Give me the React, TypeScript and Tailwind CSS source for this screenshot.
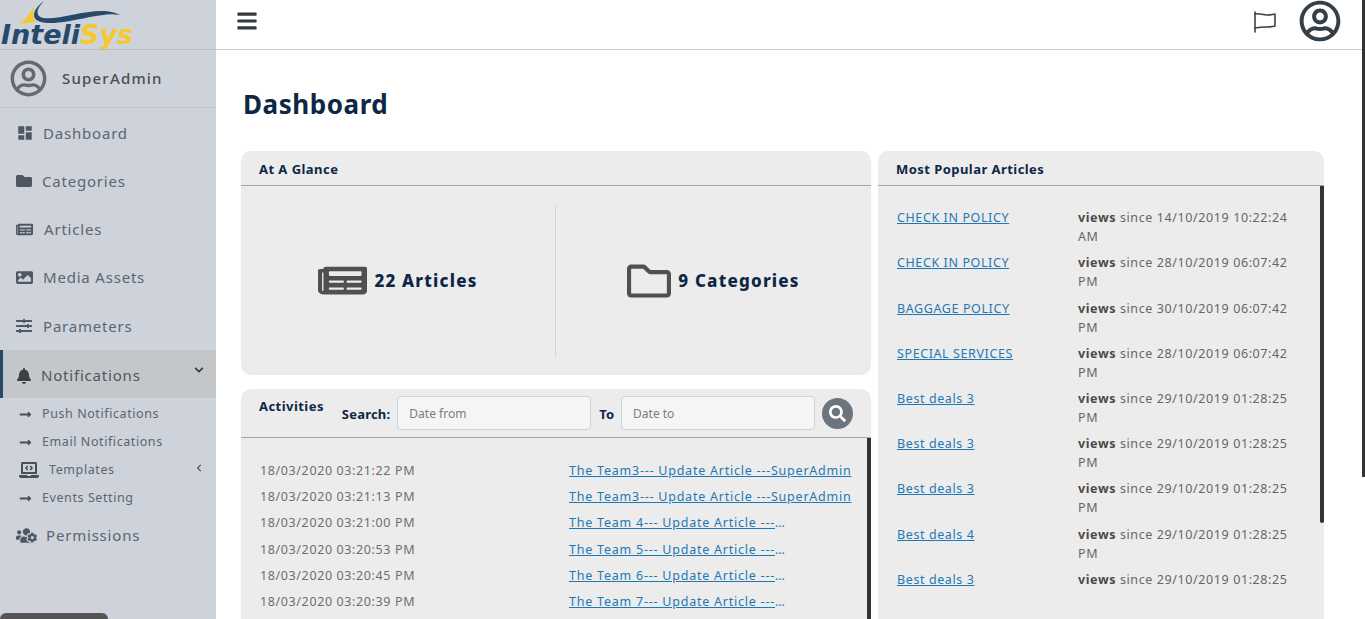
import React from "react";
import {
  FaBars,
  FaBell,
  FaChevronDown,
  FaChevronLeft,
  FaFolder,
  FaImage,
  FaLaptopCode,
  FaLongArrowAltRight,
  FaNewspaper,
  FaRegFolder,
  FaRegUserCircle,
  FaSearch,
  FaSlidersH,
  FaUsersCog,
} from "react-icons/fa";
import { MdDashboard } from "react-icons/md";

const activities = [
  { date: "18/03/2020 03:21:22 PM", text: "The Team3--- Update Article ---SuperAdmin", full: true, h: "h-[26px]" },
  { date: "18/03/2020 03:21:13 PM", text: "The Team3--- Update Article ---SuperAdmin", full: true, h: "h-[26px]" },
  { date: "18/03/2020 03:21:00 PM", text: "The Team 4--- Update Article ---SuperAdmin", full: false, h: "h-[27px]" },
  { date: "18/03/2020 03:20:53 PM", text: "The Team 5--- Update Article ---SuperAdmin", full: false, h: "h-[26px]" },
  { date: "18/03/2020 03:20:45 PM", text: "The Team 6--- Update Article ---SuperAdmin", full: false, h: "h-[26px]" },
  { date: "18/03/2020 03:20:39 PM", text: "The Team 7--- Update Article ---SuperAdmin", full: false, h: "h-[26px]" },
];

const popular = [
  { title: "CHECK IN POLICY", since: "14/10/2019 10:22:24 AM" },
  { title: "CHECK IN POLICY", since: "28/10/2019 06:07:42 PM" },
  { title: "BAGGAGE POLICY", since: "30/10/2019 06:07:42 PM" },
  { title: "SPECIAL SERVICES", since: "28/10/2019 06:07:42 PM" },
  { title: "Best deals 3", since: "29/10/2019 01:28:25 PM" },
  { title: "Best deals 3", since: "29/10/2019 01:28:25 PM" },
  { title: "Best deals 3", since: "29/10/2019 01:28:25 PM" },
  { title: "Best deals 4", since: "29/10/2019 01:28:25 PM" },
  { title: "Best deals 3", since: "29/10/2019 01:28:25 PM" },
];

function Logo() {
  return (
    <div className="relative h-[50px] overflow-hidden border-b border-[#b9bec4]">
      <svg className="absolute left-[18px] top-0" width="106" height="26" viewBox="0 0 106 26">
        <path d="M16 6 C15 12 15 18 17 22 L1 24 C8 20 12 13 16 6Z" fill="#f5c92e" />
        <path d="M26 1 C18 9 17 16 25 18 C40 20 62 11 84 11 C92 11 98 13 102 15 C92 13 84 15 72 17 C52 21 34 25 23 22 C12 19 15 9 26 1Z" fill="#264a6b" />
      </svg>
      <div className="absolute left-[1px] top-[17px] whitespace-nowrap font-['DejaVu_Sans',sans-serif] text-[27px] font-bold italic leading-[36px]">
        <span className="text-[#264a6b]">Inteli</span>
        <span className="text-[#f5c92e]">Sys</span>
      </div>
    </div>
  );
}

function NavItem({ icon, label, h, gap }: { icon: React.ReactNode; label: string; h: string; gap: string }) {
  return (
    <div className={`flex items-center pl-[16px] text-[15px] tracking-[0.8px] text-[#5c6570] ${h} ${gap}`}>
      {icon}
      {label}
    </div>
  );
}

function SubItem({ label }: { label: string }) {
  return (
    <div className="flex h-[28px] items-center gap-[10px] pl-[19px] text-[12.5px] tracking-[0.58px] text-[#5c6570]">
      <FaLongArrowAltRight className="text-[13px] text-[#4a5058]" />
      {label}
    </div>
  );
}

function Sidebar() {
  return (
    <aside className="relative h-full w-[216px] shrink-0 overflow-hidden bg-[#cdd2db]">
      <Logo />
      <div className="flex h-[58px] items-center gap-[15px] border-b border-[#bfc4ca] pl-[10px]">
        <FaRegUserCircle className="text-[37px] text-[#666a6e]" />
        <span className="text-[15px] font-medium tracking-[1.2px] text-[#4a4d50]">SuperAdmin</span>
      </div>
      <nav className="pt-[1px]">
        <NavItem h="h-[48px]" gap="gap-[9px]" icon={<MdDashboard className="text-[18px] text-[#4f5862]" />} label="Dashboard" />
        <NavItem h="h-[48px]" gap="gap-[10px]" icon={<FaFolder className="text-[16px] text-[#4f5862]" />} label="Categories" />
        <NavItem h="h-[48px]" gap="gap-[11px]" icon={<FaNewspaper className="text-[17px] text-[#4f5862]" />} label="Articles" />
        <NavItem h="h-[49px]" gap="gap-[10px]" icon={<FaImage className="text-[17px] text-[#4f5862]" />} label="Media Assets" />
        <NavItem h="h-[48px]" gap="gap-[11px]" icon={<FaSlidersH className="text-[16px] text-[#4f5862]" />} label="Parameters" />
      </nav>
      <div className="flex h-[48px] items-center border-l-[3px] border-[#264a6b] bg-[#c3c7ca] pl-[13px] pr-[12px] pt-[3px] text-[15px] tracking-[0.8px] text-[#4f5660]">
        <FaBell className="mr-[9px] text-[16px] text-[#3b4046]" />
        <span className="flex-1">Notifications</span>
        <FaChevronDown className="mb-[11px] text-[10px] text-[#33383d]" />
      </div>
      <div className="h-[113px] pt-[2px]">
        <SubItem label="Push Notifications" />
        <SubItem label="Email Notifications" />
        <div className="flex h-[28px] items-center pl-[19px] pr-[13px] text-[12.5px] tracking-[0.6px] text-[#5c6570]">
          <FaLaptopCode className="mr-[10px] text-[20px] text-[#4a5058]" />
          <span className="flex-1">Templates</span>
          <FaChevronLeft className="mb-[4px] text-[8px] text-[#4a5058]" />
        </div>
        <SubItem label="Events Setting" />
      </div>
      <NavItem h="h-[48px]" gap="gap-[9px]" icon={<FaUsersCog className="text-[21px] text-[#4f5862]" />} label="Permissions" />
      <div className="absolute bottom-0 left-0 h-[6px] w-[108px] rounded-t-[8px] bg-[#555555]" />
    </aside>
  );
}

function CardTitle({ children }: { children: React.ReactNode }) {
  return <h3 className="text-[13px] font-bold tracking-[0.45px] text-[#0d2744]">{children}</h3>;
}

function Glance() {
  return (
    <section className="h-[224px] rounded-[10px] bg-[#ececec]">
      <div className="flex h-[35px] items-center border-b border-[#a5a5a5] pl-[18px] pt-[3px]">
        <CardTitle>At A Glance</CardTitle>
      </div>
      <div className="flex h-[189px] py-[19px]">
        <div className="flex w-[315px] items-center justify-center gap-[7px] border-r border-[#d4d4d4]">
          <FaNewspaper preserveAspectRatio="none" className="h-[37px] w-[49px] text-[#505050]" />
          <span className="text-[17px] font-extrabold tracking-[1.2px] text-[#0d2744]">22 Articles</span>
        </div>
        <div className="flex flex-1 items-center justify-center gap-[7px]">
          <FaRegFolder className="text-[44px] text-[#505050]" />
          <span className="text-[17px] font-extrabold tracking-[1.2px] text-[#0d2744]">9 Categories</span>
        </div>
      </div>
    </section>
  );
}

function Activities() {
  return (
    <section className="relative mt-[14px] flex-1 rounded-t-[10px] bg-[#ececec]">
      <div className="flex h-[49px] items-start border-b border-[#a5a5a5] pl-[18px]">
        <div className="pt-[8px]">
          <CardTitle>Activities</CardTitle>
        </div>
        <span className="ml-[18px] mt-[16px] text-[13px] font-bold leading-[18px] tracking-[0.2px] text-[#0d2744]">Search:</span>
        <input
          placeholder="Date from"
          className="ml-[7px] mt-[7px] h-[34px] w-[194px] rounded-[4px] border border-[#ced4da] bg-[#f5f5f5] pl-[11px] pt-[1px] text-[12px] placeholder:text-[#7d7d7d]"
        />
        <span className="ml-[8px] mt-[16px] text-[13px] font-bold leading-[18px] text-[#0d2744]">To</span>
        <input
          placeholder="Date to"
          className="ml-[7px] mt-[7px] h-[34px] w-[194px] rounded-[4px] border border-[#ced4da] bg-[#f5f5f5] pl-[11px] pt-[1px] text-[12px] placeholder:text-[#7d7d7d]"
        />
        <div className="ml-[7px] mt-[9px] flex h-[31px] w-[31px] items-center justify-center rounded-full bg-[#6c757d]">
          <FaSearch className="text-[17px] text-white" />
        </div>
      </div>
      <div className="pl-[19px] pr-[20px] pt-[20px]">
        {activities.map((a) => (
          <div key={a.date} className={`flex items-center justify-between text-[12.5px] ${a.h}`}>
            <span className="tracking-[0.62px] text-[#6e6e6e]">{a.date}</span>
            <div className="w-[282px]">
              <a className={`block truncate tracking-[0.77px] text-[#1f78b4] underline ${a.full ? "w-[284px]" : "w-[218px]"}`}>{a.text}</a>
            </div>
          </div>
        ))}
      </div>
      <div className="absolute bottom-0 right-0 top-[49px] w-[4px] bg-[#333333]" />
    </section>
  );
}

function Popular() {
  return (
    <section className="relative h-full w-[446px] rounded-t-[10px] bg-[#ececec]">
      <div className="flex h-[35px] items-center border-b border-[#a5a5a5] pl-[18px] pt-[3px]">
        <CardTitle>Most Popular Articles</CardTitle>
      </div>
      <div className="h-[405px] overflow-hidden pl-[19px] pr-[30px] pt-[22.1px]">
        {popular.map((p, i) => (
          <div key={i} className="flex h-[45.22px] text-[12.5px] leading-[19px] tracking-[0.6px]">
            <a className="w-[181px] shrink-0 text-[#1f78b4] underline">{p.title}</a>
            <p className="text-[#666666]">
              <b className="text-[#4a4a4a]">views</b> since {p.since}
            </p>
          </div>
        ))}
      </div>
      <div className="absolute right-0 top-[35px] h-[337px] w-[4px] rounded-b-[2px] bg-[#333333]" />
    </section>
  );
}

export default function App() {
  return (
    <div className="relative flex h-[619px] w-[1365px] overflow-hidden bg-white font-['Noto_Sans',sans-serif]">
      <Sidebar />
      <main className="flex h-full flex-1 flex-col">
        <header className="flex h-[50px] shrink-0 items-center border-b border-[#cccccc] pl-[20px] pr-[24px]">
          <FaBars className="mb-[7px] text-[22px] text-[#343a40]" />
          <div className="flex-1" />
          <svg width="24" height="22" viewBox="0 0 24 22" fill="none" stroke="#3a4248" strokeWidth="1.6" strokeLinejoin="round" strokeLinecap="round" className="mb-[5px] mr-[22px]">
            <path d="M2 1 V21" />
            <path d="M2 3 C7 2 9 4 14 4 C17 4 19 4 22 3 V15 C19 16 17 16 14 16 C9 16 7 16 2 17" />
          </svg>
          <FaRegUserCircle className="mb-[7px] text-[42px] text-[#343f47]" />
        </header>
        <div className="flex flex-1 flex-col overflow-hidden pl-[25px]">
          <h1 className="pl-[2px] pt-[34px] text-[26px] font-bold leading-[40px] tracking-[0.55px] text-[#0d2744]">Dashboard</h1>
          <div className="mt-[27px] flex flex-1 gap-[7px]">
            <div className="flex w-[630px] flex-col">
              <Glance />
              <Activities />
            </div>
            <Popular />
          </div>
        </div>
      </main>
      <div className="absolute right-0 top-0 h-[477px] w-[3px] bg-[#333333]" />
    </div>
  );
}
